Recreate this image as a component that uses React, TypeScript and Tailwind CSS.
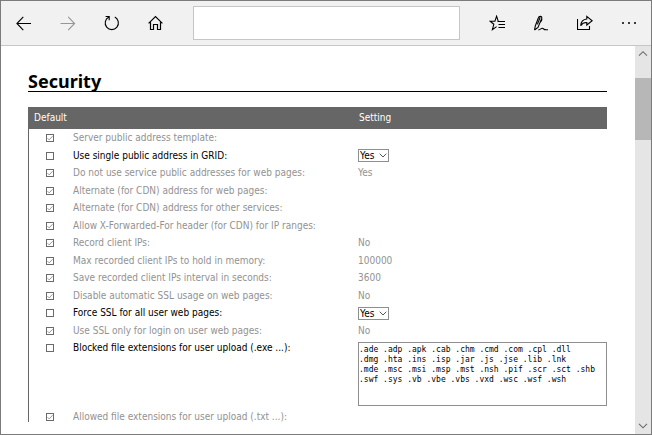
import { useState } from "react";
import type { ReactNode } from "react";

type Row = {
  id: string;
  label: string;
  value?: string;
  kind?: "select" | "textarea";
};

const blocked = [
  ".ade .adp .apk .cab .chm .cmd .com .cpl .dll",
  ".dmg .hta .ins .isp .jar .js .jse .lib .lnk",
  ".mde .msc .msi .msp .mst .nsh .pif .scr .sct .shb",
  ".swf .sys .vb .vbe .vbs .vxd .wsc .wsf .wsh",
].join("\n");

const rows: Row[] = [
  { id: "template", label: "Server public address template:" },
  { id: "grid", label: "Use single public address in GRID:", value: "Yes", kind: "select" },
  { id: "service", label: "Do not use service public addresses for web pages:", value: "Yes" },
  { id: "cdn-web", label: "Alternate (for CDN) address for web pages:" },
  { id: "cdn-other", label: "Alternate (for CDN) address for other services:" },
  { id: "forwarded", label: "Allow X-Forwarded-For header (for CDN) for IP ranges:" },
  { id: "record", label: "Record client IPs:", value: "No" },
  { id: "max-ips", label: "Max recorded client IPs to hold in memory:", value: "100000" },
  { id: "interval", label: "Save recorded client IPs interval in seconds:", value: "3600" },
  { id: "auto-ssl", label: "Disable automatic SSL usage on web pages:", value: "No" },
  { id: "force-ssl", label: "Force SSL for all user web pages:", value: "Yes", kind: "select" },
  { id: "login-ssl", label: "Use SSL only for login on user web pages:", value: "No" },
  { id: "blocked", label: "Blocked file extensions for user upload (.exe ...):", value: blocked, kind: "textarea" },
  { id: "allowed", label: "Allowed file extensions for user upload (.txt ...):" },
];

function ToolButton({ label, children, disabled }: { label: string; children: ReactNode; disabled?: boolean }) {
  return (
    <button type="button" aria-label={label} disabled={disabled} className="size-4 shrink-0 text-black disabled:text-[#969696]">
      <svg viewBox="0 0 16 16" className="block size-4" fill="none" stroke="currentColor" strokeWidth="1.1">
        {children}
      </svg>
    </button>
  );
}

function Toolbar() {
  return (
    <header className="flex h-[45px] shrink-0 items-center gap-[29px] border-b border-[#c6c6c6] bg-[#f1f1f1] pr-3.5 pl-[15px]">
      <nav className="flex gap-7" aria-label="Navigation">
        <ToolButton label="Back">
          <path d="M7.3 1.8 0.9 8.5 7.3 15.2M1 8.5H15" />
        </ToolButton>
        <ToolButton label="Forward" disabled>
          <path d="M8.2 1.8 14.6 8.5 8.2 15.2M14.5 8.5H0.5" />
        </ToolButton>
        <ToolButton label="Refresh">
          <path d="M10.8 2.1A6.6 6.6 0 1 1 4.8 2.1M1.6 1.5H5.2V5.2" />
        </ToolButton>
        <ToolButton label="Home">
          <path d="M0.6 8.4 7.5 1.6 14.4 8.4M2.5 7.2V14.5H5.5V9.5H9.5V14.5H12.5V7.2" strokeWidth="1.2" />
        </ToolButton>
      </nav>
      <input aria-label="Address" className="h-[34px] min-w-0 flex-1 border border-[#c6c6c6] bg-white px-2 text-sm outline-none" />
      <div className="flex gap-7">
        <ToolButton label="Favorites">
          <path d="M9.2 6.2 7.6 1.2 5.9 6.2H1.2L4.8 9.3 3.4 14.6 7.6 11.6M8.5 6.5H16M9.5 9.5H16M9.5 12.5H16" />
        </ToolButton>
        <ToolButton label="Add notes">
          <path d="M1.5 15 2.3 11 5.3 3C6 0.7 9.4 0.8 8.7 3.4L5 12.4 1.5 15M7.2 2.2 4.4 9.4M8.7 3.4C9.3 4.9 8.2 6.3 6.9 7.6M5.4 14.9C7.2 15 8.2 13.1 9.4 13.2 10.8 13.3 10 15.3 15 14.7" />
        </ToolButton>
        <ToolButton label="Share">
          <path d="M0.5 4V14.5H12.5V11" />
          <path d="M9.8 1.4 15.2 5.7 9.8 10V7.5C6.8 7.3 5 8.6 3.7 10.7 4 6.9 6.2 4.3 9.8 4Z" />
        </ToolButton>
        <ToolButton label="More">
          <path d="M1 8H3M7 8H9M13 8H15" strokeWidth="1.7" />
        </ToolButton>
      </div>
    </header>
  );
}

function Check({ id, checked, onChange }: { id: string; checked: boolean; onChange: () => void }) {
  return (
    <span className="ml-[17px] grid size-2">
      <input
        id={id}
        type="checkbox"
        checked={checked}
        onChange={onChange}
        className="col-start-1 row-start-1 size-2 appearance-none border border-[#6a6a6a] bg-white"
      />
      {checked && (
        <svg viewBox="0 0 8 8" className="pointer-events-none col-start-1 row-start-1 size-2" fill="none" stroke="#9a9a9a">
          <path d="M1.5 4.2 3.2 5.9 6.6 2.2" />
        </svg>
      )}
    </span>
  );
}

function Setting({ row }: { row: Row }) {
  if (row.kind === "select") {
    return (
      <span className="grid h-[13px] w-[31px] items-center">
        <select
          aria-label={row.label}
          defaultValue={row.value}
          className="col-start-1 row-start-1 h-[13px] w-full appearance-none border border-[#8e8e8e] bg-white pl-px text-[10px] leading-[11px] text-black"
        >
          <option>Yes</option>
          <option>No</option>
        </select>
        <svg viewBox="0 0 8 5" className="pointer-events-none col-start-1 row-start-1 mr-0.5 h-[5px] w-2 justify-self-end" fill="none" stroke="#555">
          <path d="M0.7 0.7 4 4 7.3 0.7" />
        </svg>
      </span>
    );
  }
  if (row.kind === "textarea") {
    return (
      <textarea
        aria-label={row.label}
        defaultValue={row.value}
        spellCheck={false}
        className="mt-[3px] block h-16 w-full resize-none overflow-hidden border border-[#8e8e8e] bg-white py-0.5 font-['DejaVu_Sans_Mono',monospace] text-[8px] leading-[10px] text-black"
      />
    );
  }
  return <>{row.value}</>;
}

function SettingsTable() {
  const [defaults, setDefaults] = useState<Record<string, boolean>>(() =>
    Object.fromEntries(rows.map((row) => [row.id, !row.kind])),
  );
  return (
    <table className="mt-[15px] w-full table-fixed border-separate border-spacing-0 text-left text-[10px] leading-[14px]">
      <thead>
        <tr className="h-[22px] bg-[#666] text-white">
          <th className="w-[45px] pl-1.5 font-normal">Default</th>
          <th className="w-[285px]" aria-label="Name" />
          <th className="pl-px font-normal">Setting</th>
        </tr>
      </thead>
      <tbody>
        {rows.map((row) => (
          <tr
            key={row.id}
            className={`${
              row.kind === "textarea" ? "h-[69px] align-top" : "align-middle odd:h-[18px] even:h-[17px]"
            } ${defaults[row.id] ? "text-[#929292]" : "text-black"}`}
          >
            <td className={row.kind === "textarea" ? "border-l border-[#666] pt-[5px]" : "border-l border-[#666]"}>
              <Check
                id={row.id}
                checked={defaults[row.id]}
                onChange={() => setDefaults({ ...defaults, [row.id]: !defaults[row.id] })}
              />
            </td>
            <td className={row.kind === "textarea" ? "pt-0.5" : ""}>
              <label htmlFor={row.id} className="block whitespace-nowrap">
                {row.label}
              </label>
            </td>
            <td>
              <Setting row={row} />
            </td>
          </tr>
        ))}
      </tbody>
    </table>
  );
}

function Scrollbar() {
  return (
    <div className="flex w-4 shrink-0 flex-col items-center bg-[#e5e5e5]" aria-hidden="true">
      <svg viewBox="0 0 16 16" className="h-4 w-4 shrink-0" fill="none" stroke="#6a6a6a" strokeWidth="1.1">
        <path d="M4 9.7 8 5.7 12 9.7" />
      </svg>
      <div className="mt-4 h-[62px] w-full bg-[#b7b7b7]" />
      <svg viewBox="0 0 16 16" className="mt-auto h-4 w-4 shrink-0" fill="none" stroke="#6a6a6a" strokeWidth="1.1">
        <path d="M4 5.8 8 9.8 12 5.8" />
      </svg>
    </div>
  );
}

export default function App() {
  return (
    <div className="flex h-screen flex-col overflow-hidden border border-[#7b7b7b] bg-white font-['DejaVu_Sans_Condensed','DejaVu_Sans',sans-serif]">
      <Toolbar />
      <div className="flex min-h-0 flex-1">
        <main className="mb-3 min-w-0 flex-1 overflow-hidden pt-[26px] pr-7 pl-[27px]">
          <h1 className="border-b border-black font-['Noto_Sans',sans-serif] text-[18px] leading-[19px] font-bold text-black">Security</h1>
          <SettingsTable />
        </main>
        <Scrollbar />
      </div>
    </div>
  );
}
